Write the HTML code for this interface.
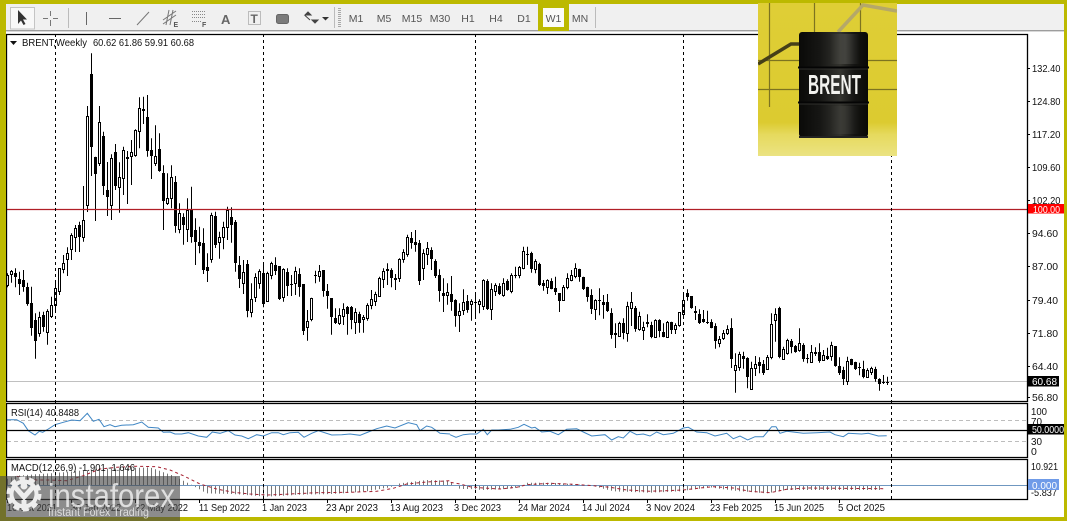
<!DOCTYPE html>
<html lang="en">
<head>
<meta charset="utf-8">
<title>BRENT Weekly</title>
<style>
html,body{margin:0;padding:0;background:#fff}
body{width:1067px;height:521px;overflow:hidden}
svg{display:block;font-family:"Liberation Sans",sans-serif}
#s{filter:blur(.3px)}
</style>
</head>
<body>
<svg id="s" xmlns="http://www.w3.org/2000/svg" width="1067" height="521" viewBox="0 0 1067 521">
<defs>
<linearGradient id="bar" x1="0" x2="1" y1="0" y2="0">
<stop offset="0" stop-color="#0a0a08"/><stop offset=".3" stop-color="#161614"/><stop offset=".6" stop-color="#34342f"/><stop offset=".8" stop-color="#141412"/><stop offset="1" stop-color="#0a0a06"/>
</linearGradient>
<linearGradient id="hl" x1="0" x2="1" y1="0" y2="0">
<stop offset="0" stop-color="#555550" stop-opacity="0"/><stop offset=".5" stop-color="#555550" stop-opacity=".6"/><stop offset="1" stop-color="#555550" stop-opacity="0"/>
</linearGradient>
<linearGradient id="bg" x1="0" x2="0" y1="0" y2="1">
<stop offset="0" stop-color="#dfce36"/><stop offset=".78" stop-color="#dccb30"/><stop offset=".86" stop-color="#e6da5e"/><stop offset="1" stop-color="#ebe382"/>
</linearGradient>
</defs>
<rect width="1067" height="521" fill="#fff"/>
<!-- toolbar -->
<rect x="0" y="4" width="1067" height="27" fill="#f0f0f0"/>
<rect x="0" y="30" width="1067" height="1.4" fill="#9d9d9d"/>
<rect x="10.5" y="7.5" width="24" height="21.5" fill="#f8f8f8" stroke="#c4c4c4"/>
<path d="M18 10V24L21 20.5 23.5 25 25.5 24 23 19.5H27Z" fill="#333"/>
<path d="M50.5 11V16M50.5 20V26M43 18.5H48M53 18.5H58" stroke="#777" fill="none"/>
<path d="M68.5 8V28" stroke="#bbb"/>
<path d="M86.5 12V25" stroke="#666"/>
<path d="M109 18.5H121" stroke="#666"/>
<path d="M137 25L149 12" stroke="#777"/>
<path d="M163 20L176 11M163 24L176 15M166 25L169 10M170 25L173 10" stroke="#777" fill="none"/>
<text x="173.500" y="27" font-size="7" font-weight="bold" fill="#555">E</text>
<path d="M192 11.500H205M192 14.500H205M192 17.500H205M192 21.500H201" stroke="#888" stroke-dasharray="1 1" fill="none"/>
<text x="202" y="27" font-size="7" font-weight="bold" fill="#555">F</text>
<text x="221" y="24" font-size="13" font-weight="bold" fill="#666">A</text>
<rect x="248.500" y="11.500" width="12" height="13" fill="none" stroke="#888" stroke-dasharray="1 1"/>
<text x="250.500" y="23" font-size="12" font-weight="bold" fill="#666">T</text>
<rect x="276.500" y="14.500" width="12" height="9" rx="2" fill="#7b7b7b" stroke="#666"/>
<path d="M305 15L308 12 311 15ZM305 15.500L310 20M312 20L315 23 318 20Z" fill="#444" stroke="#444"/>
<path d="M322 17H329L325.500 20.500Z" fill="#333"/>
<path d="M334.500 7V28M595.500 7V28" stroke="#bbb"/>
<path d="M339.500 8V27" stroke="#a8a8a8" stroke-width="3" stroke-dasharray="1 1"/>
<g font-size="10.500" fill="#555" text-anchor="middle">
<text x="356" y="22">M1</text><text x="384" y="22">M5</text><text x="412" y="22">M15</text><text x="440" y="22">M30</text><text x="468" y="22">H1</text><text x="496" y="22">H4</text><text x="524" y="22">D1</text><text x="580" y="22">MN</text>
</g>
<rect x="538" y="0" width="31" height="31" fill="#bcb900"/>
<rect x="543" y="8" width="21" height="19" fill="#fbfbf8"/>
<text x="553.500" y="22" font-size="10.500" fill="#555" text-anchor="middle">W1</text>
<!-- chart panels -->
<path d="M7 381.500H1027" stroke="#c0c0c0"/>
<path d="M7 420.500H1027M7 441.500H1027" stroke="#bdbdbd" stroke-dasharray="4 3"/>
<g id="hist"></g>
<path d="M7 485.500H1027" stroke="#6f97c0"/>
<g id="cand"></g>
<path d="M7 209.500H1027" stroke="#b01e26" stroke-width="1.300"/>
<polyline id="rsi1" fill="none" stroke="#3f86c4"/>
<polyline id="rsi2" fill="none" stroke="#3f86c4"/>
<polyline id="sig" fill="none" stroke="#a52030" stroke-dasharray="3 3"/>
<path d="M55.500 34V499M263.500 34V499M475.500 34V499M683.500 34V499M891.500 34V499" stroke="#000" stroke-dasharray="3 3" fill="none"/>
<path d="M6.500 34.500H1027.500V401.500H6.500ZM6.500 403.500H1027.500V457.500H6.500ZM6.500 459.500H1027.500V499.500H6.500ZM7 430.500H1027" fill="none" stroke="#000" stroke-width="1.300"/>
<!-- top-left label -->
<path d="M10 41H17L13.500 45Z" fill="#111"/>
<g font-size="10.500" fill="#111">
<text x="22" y="46" textLength="65" lengthAdjust="spacingAndGlyphs">BRENT,Weekly</text>
<text x="93" y="46" textLength="101" lengthAdjust="spacingAndGlyphs">60.62 61.86 59.91 60.68</text>
<text x="11" y="416" textLength="68" lengthAdjust="spacingAndGlyphs">RSI(14) 40.8488</text>
<text x="11" y="471" textLength="124" lengthAdjust="spacingAndGlyphs">MACD(12,26,9) -1.901 -1.646</text>
</g>
<!-- price axis -->
<path d="M1027 68.500h3M1027 101.500h3M1027 134.500h3M1027 167.500h3M1027 200.500h3M1027 233.500h3M1027 266.500h3M1027 300.500h3M1027 333.500h3M1027 366.500h3M1027 397.500h3" stroke="#000"/>
<g font-size="10.500" fill="#111">
<text x="1032" y="72" textLength="28.500" lengthAdjust="spacingAndGlyphs">132.40</text>
<text x="1032" y="105" textLength="28.500" lengthAdjust="spacingAndGlyphs">124.80</text>
<text x="1032" y="138" textLength="28.500" lengthAdjust="spacingAndGlyphs">117.20</text>
<text x="1032" y="171" textLength="28.500" lengthAdjust="spacingAndGlyphs">109.60</text>
<text x="1032" y="204" textLength="28.500" lengthAdjust="spacingAndGlyphs">102.20</text>
<text x="1032" y="237" textLength="26" lengthAdjust="spacingAndGlyphs">94.60</text>
<text x="1032" y="270" textLength="26" lengthAdjust="spacingAndGlyphs">87.00</text>
<text x="1032" y="304" textLength="26" lengthAdjust="spacingAndGlyphs">79.40</text>
<text x="1032" y="337" textLength="26" lengthAdjust="spacingAndGlyphs">71.80</text>
<text x="1032" y="370" textLength="26" lengthAdjust="spacingAndGlyphs">64.40</text>
<text x="1032" y="401" textLength="26" lengthAdjust="spacingAndGlyphs">56.80</text>
<text x="1031" y="415" textLength="16" lengthAdjust="spacingAndGlyphs">100</text>
<text x="1031" y="425" textLength="11" lengthAdjust="spacingAndGlyphs">70</text>
<text x="1031" y="445" textLength="11" lengthAdjust="spacingAndGlyphs">30</text>
<text x="1031" y="455">0</text>
<text x="1031" y="470" textLength="27" lengthAdjust="spacingAndGlyphs">10.921</text>
<text x="1031" y="496" textLength="26" lengthAdjust="spacingAndGlyphs">-5.837</text>
</g>
<rect x="1028" y="204" width="36" height="9.500" fill="#f00"/>
<text x="1033" y="213" font-size="10.500" fill="#fff" textLength="27" lengthAdjust="spacingAndGlyphs">100.00</text>
<rect x="1028" y="376" width="31" height="10.500" fill="#000"/>
<text x="1032" y="385" font-size="10.500" fill="#fff" textLength="25" lengthAdjust="spacingAndGlyphs">60.68</text>
<rect x="1028" y="424" width="36" height="10.500" fill="#000"/>
<text x="1032" y="433" font-size="10.500" fill="#fff" textLength="32" lengthAdjust="spacingAndGlyphs">50.0000</text>
<rect x="1028" y="479" width="31" height="11" fill="#6f9be8"/>
<text x="1032" y="489" font-size="10.500" fill="#fff" textLength="25" lengthAdjust="spacingAndGlyphs">0.000</text>
<!-- date axis -->
<path d="M7.500 499v4M71.500 499v4M135.500 499v4M199.500 499v4M263.500 499v4M327.500 499v4M391.500 499v4M455.500 499v4M519.500 499v4M583.500 499v4M647.500 499v4M711.500 499v4M775.500 499v4M839.500 499v4" stroke="#000"/>
<g font-size="10.500" fill="#111">
<text x="7" y="511" textLength="50" lengthAdjust="spacingAndGlyphs">10 Oct 2021</text>
<text x="71" y="511" textLength="50" lengthAdjust="spacingAndGlyphs">30 Jan 2022</text>
<text x="135" y="511" textLength="53" lengthAdjust="spacingAndGlyphs">22 May 2022</text>
<text x="199" y="511" textLength="51" lengthAdjust="spacingAndGlyphs">11 Sep 2022</text>
<text x="262" y="511" textLength="45" lengthAdjust="spacingAndGlyphs">1 Jan 2023</text>
<text x="326" y="511" textLength="52" lengthAdjust="spacingAndGlyphs">23 Apr 2023</text>
<text x="390" y="511" textLength="53" lengthAdjust="spacingAndGlyphs">13 Aug 2023</text>
<text x="454" y="511" textLength="47" lengthAdjust="spacingAndGlyphs">3 Dec 2023</text>
<text x="518" y="511" textLength="52" lengthAdjust="spacingAndGlyphs">24 Mar 2024</text>
<text x="582" y="511" textLength="48" lengthAdjust="spacingAndGlyphs">14 Jul 2024</text>
<text x="646" y="511" textLength="49" lengthAdjust="spacingAndGlyphs">3 Nov 2024</text>
<text x="710" y="511" textLength="52" lengthAdjust="spacingAndGlyphs">23 Feb 2025</text>
<text x="774" y="511" textLength="50" lengthAdjust="spacingAndGlyphs">15 Jun 2025</text>
<text x="838" y="511" textLength="47" lengthAdjust="spacingAndGlyphs">5 Oct 2025</text>
</g>
<!-- olive frame -->
<path d="M0 0H1067V521H0ZM6 4V517H1064V4Z" fill="#bcb900" fill-rule="evenodd"/>
<!-- watermark -->
<rect x="0" y="476" width="180" height="45" fill="rgb(70,70,70)" fill-opacity=".62"/>
<circle cx="24" cy="494" r="12.500" fill="none" stroke="#eee" stroke-width="4"/>
<circle cx="24" cy="494" r="15.500" fill="none" stroke="#eee" stroke-width="4" stroke-dasharray="6 3.740"/>
<path d="M24 500V510M15 487L24 497 33 487" fill="none" stroke="#eee" stroke-width="5"/>
<circle cx="24" cy="486" r="3.500" fill="#eee"/>
<text x="48" y="507" font-size="33" fill="#fff" fill-opacity=".72" textLength="127" lengthAdjust="spacingAndGlyphs">instaforex</text>
<text x="48" y="516" font-size="12" fill="#fff" fill-opacity=".7" textLength="101" lengthAdjust="spacingAndGlyphs">Instant Forex Trading</text>
<!-- barrel image -->
<svg x="758" y="3" width="139" height="153" viewBox="758 3 139 153">
<rect x="758" y="3" width="139" height="153" fill="url(#bg)"/>
<path d="M769.500 3V107M814.500 3V60M860.500 3V60M758 60.500H897M758 89.500H897" stroke="#7d7320" stroke-width="1.200" fill="none"/>
<path d="M758 64L791 44H800" stroke="#453f18" stroke-width="3.500" fill="none"/>
<path d="M838 32L863 5 897 11" stroke="#b5a869" stroke-width="3.500" fill="none"/>
<rect x="799" y="32" width="69" height="105" rx="3" fill="url(#bar)"/>
<rect x="830" y="34" width="30" height="30" fill="url(#hl)"/>
<rect x="830" y="106" width="30" height="28" fill="url(#hl)" opacity=".5"/>
<path d="M798 67.500H869M798 102.500H869" stroke="#050505" stroke-width="2"/>
<path d="M799 69H868M799 104H868" stroke="#3a3a36" stroke-width=".7"/>
<path d="M799 137H868" stroke="#222" stroke-width="2"/>
<text x="808" y="94" font-size="28" font-weight="bold" fill="#f2f2ee" textLength="53" lengthAdjust="spacingAndGlyphs">BRENT</text>
</svg>
</svg>
<script>
var A=[[700,705,735,742,0],[690,694,702,728,0],[685,700,712,742,1],[695,718,732,765,1],[690,720,740,755,1],[728,740,793,797,1],[740,790,865,887,1],[820,840,902,956,1],[815,832,880,890,0],[815,825,860,875,1],[808,812,875,914,0],[770,796,828,834,0],[720,745,795,818,0],[685,685,752,765,0],[645,670,686,700,0],[622,640,656,708,0],[580,586,628,660,0],[555,565,590,636,0],[545,555,590,636,1],[438,540,590,605,0],[198,228,494,516,0],[40,102,322,408,1],[350,352,402,543,1],[198,246,370,378,0],[275,289,437,465,1],[366,450,470,528,1],[343,355,494,540,0],[312,337,437,450,1],[367,412,442,518,0],[320,330,415,465,0],[333,351,353,492,0],[300,337,347,435,0],[268,270,344,350,0],[172,205,272,325,0],[170,207,208,252,0],[165,232,332,350,1],[295,331,347,417,1],[256,347,368,378,0],[280,327,392,395,1],[376,400,482,570,1],[400,474,488,495,0],[376,412,475,505,0],[408,427,557,578,1],[490,520,566,580,0],[520,530,556,614,1],[475,510,566,606,0],[440,510,590,608,1],[535,570,605,675,1],[560,607,617,640,1],[565,610,690,702,1],[640,680,692,726,1],[518,526,658,668,0],[515,528,615,624,1],[575,592,606,656,0],[545,562,592,628,0],[500,510,562,600,0],[502,530,554,608,1],[540,546,668,695,1],[648,676,716,744,1],[660,696,730,762,0],[660,672,812,832,1],[730,778,815,832,0],[700,712,770,786,0],[688,692,730,746,0]];
var B=[[190,220,312,322,1],[215,218,302,305,0],[185,190,224,238,0],[172,196,212,225,1],[198,198,296,300,1],[205,208,290,305,0],[205,217,257,288,1],[225,253,256,288,1],[200,214,250,285,0],[205,223,262,290,1],[252,252,392,405,1],[330,362,382,422,0],[293,294,358,364,0],[212,226,229,250,1],[195,212,227,245,0],[210,211,272,290,1],[252,274,287,326,1],[295,295,352,404,1],[325,355,368,372,1],[325,346,370,375,0],[310,328,348,375,0],[318,321,342,404,1],[318,320,360,388,1],[325,337,365,402,0],[335,343,368,398,1],[345,352,358,398,0],[310,315,355,362,0],[270,298,316,328,0],[275,282,302,318,0],[230,234,287,290,0],[205,213,238,264,0],[190,208,210,255,0],[205,210,233,262,1],[222,235,240,270,1],[175,178,235,246,0],[148,156,178,188,0],[104,111,162,170,0],[96,115,128,146,1],[90,126,134,155,1],[120,130,242,255,1],[148,160,203,240,0],[126,144,162,195,0],[142,150,176,210,1],[178,183,228,234,1],[208,226,272,305,1],[235,280,287,336,1],[250,277,284,314,0],[228,283,305,332,1],[298,300,347,380,1],[310,334,344,396,0],[268,307,330,345,0],[285,304,330,338,1],[298,304,313,362,0],[285,306,310,356,1],[298,304,313,340,0],[238,240,318,330,0],[238,242,327,330,1],[250,267,326,360,0],[250,256,272,288,0],[250,259,282,285,1],[235,250,286,290,0],[238,242,270,272,1],[220,225,272,280,0],[200,225,228,235,1],[198,200,224,235,0],[140,154,203,208,0],[140,162,163,195,1],[155,158,206,218,1],[178,184,208,220,0],[188,192,254,258,1],[240,250,258,272,1],[238,240,260,282,0],[235,243,266,268,1],[230,264,276,285,1],[280,280,304,336,1]];
var C=[[135,142,180,182,0],[100,115,142,148,0],[90,105,120,124,0],[70,85,107,115,0],[86,87,112,125,1],[110,112,147,150,1],[140,142,170,185,1],[148,166,208,222,1],[178,181,208,240,0],[145,181,183,226,1],[165,186,194,236,1],[162,186,212,216,1],[205,219,284,296,1],[250,280,284,324,1],[245,250,287,288,0],[235,250,278,298,1],[185,198,280,305,0],[156,187,205,258,0],[198,205,266,275,1],[215,228,266,272,0],[245,262,270,300,0],[223,247,252,262,1],[245,255,290,295,1],[238,240,290,292,0],[238,240,272,292,1],[250,277,290,292,1],[243,245,290,292,0],[245,247,270,282,1],[250,256,266,282,0],[216,217,256,260,0],[165,181,221,236,0],[148,160,172,182,1],[168,168,203,206,1],[198,213,220,240,1],[208,222,248,252,1],[210,238,246,248,1],[212,246,250,252,1],[238,246,263,265,1],[250,258,302,326,1],[288,298,308,322,0],[270,280,293,300,0],[256,268,280,285,0],[235,265,356,384,1],[340,376,391,458,0],[335,343,380,392,0],[335,349,357,386,1],[352,355,412,445,1],[365,384,448,448,0],[348,371,384,408,0],[352,367,379,400,1],[360,373,398,405,1],[345,352,386,386,0],[220,253,352,358,0],[205,223,241,305,0],[200,205,350,355,1],[320,328,356,358,0],[296,301,338,344,0],[297,304,320,340,1],[315,319,336,338,1],[265,310,331,335,0],[310,316,356,365,1],[342,355,358,370,1],[315,337,366,368,0],[322,337,340,348,0],[310,337,363,368,1],[330,346,359,362,0],[323,347,356,360,1],[305,316,349,362,0],[318,319,378,380,1],[352,378,400,405,1],[380,390,417,435,1],[350,364,423,435,0],[356,358,374,376,1],[365,367,388,390,1],[368,381,383,406,1],[362,388,410,415,1],[385,391,410,412,0],[380,384,395,405,0],[380,386,418,425,1],[415,418,431,452,1],[405,427,428,432,1],[410,425,427,435,1]];
var wick='',fill='',hollow='',i=0;
function add(list,oy){
  list.forEach(function(c){
    var x=7.5+4*i,h=oy+c[0]/3,t=Math.round(oy+c[1]/3),b=Math.round(oy+c[2]/3),l=oy+c[3]/3;
    if(b<=t)b=t+1;
    wick+='M'+x+' '+h.toFixed(1)+'V'+l.toFixed(1);
    if(c[4])fill+='<rect x="'+(x-1.5)+'" y="'+t+'" width="3" height="'+(b-t)+'"/>';
    else hollow+='<rect x="'+(x-1)+'" y="'+(t+.5)+'" width="2" height="'+(b-t)+'"/>';
    i++;
  });
}
add(A,40);add(B,200);add(C,240);
document.getElementById('cand').innerHTML='<path d="'+wick+'" stroke="#000" fill="none"/><g fill="#000">'+fill+'</g><g fill="#fff" stroke="#000">'+hollow+'</g>';
function pts(a,ox,oy){return a.map(function(p){return (ox+p[0]/3).toFixed(1)+','+(oy+p[1]/3).toFixed(1)});}
var r1=[[20,47],[50,47],[70,58],[85,80],[105,93],[118,82],[128,85],[145,75],[165,62],[190,55],[215,48],[240,50],[262,28],[280,52],[297,46],[312,68],[330,62],[345,68],[365,64],[400,62],[425,54],[445,70],[475,72],[490,85],[510,84],[525,90],[545,90],[565,86],[595,96],[620,100],[637,84],[660,88],[685,80],[705,93],[725,96],[745,104],[770,92],[790,96],[815,86],[835,86],[850,92],[870,86],[895,85],[912,100],[935,88],[955,80],[995,93],[1025,92],[1050,90],[1080,94],[1105,84],[1130,74],[1160,66],[1185,72],[1225,56],[1250,62],[1260,80],[1280,66],[1295,70],[1320,88],[1350,90]];
var r2=[[0,92],[18,100],[40,92],[60,90],[80,90],[100,76],[112,92],[125,78],[145,78],[180,76],[205,70],[222,61],[245,72],[255,70],[275,84],[300,82],[325,92],[350,76],[380,74],[400,84],[425,96],[465,92],[485,108],[505,98],[520,102],[540,82],[560,92],[580,90],[600,96],[620,84],[640,92],[670,88],[700,72],[715,70],[740,84],[770,86],[795,96],[830,88],[850,104],[870,96],[893,108],[915,98],[940,98],[965,68],[978,68],[990,88],[1010,82],[1060,88],[1100,86],[1140,84],[1155,92],[1180,98],[1195,88],[1235,90],[1255,88],[1285,96],[1310,95]];
document.getElementById('rsi1').setAttribute('points',pts(r1,0,404).join(' '));
document.getElementById('rsi2').setAttribute('points',pts(r2,450,404).join(' '));
var s1=[[50,217],[100,228],[150,228],[200,230],[250,215],[300,195],[350,190],[410,187],[470,188],[510,198],[550,215],[600,240],[650,255],[700,265],[750,270],[800,273],[870,270],[950,266],[1050,265],[1130,262],[1180,253],[1220,240],[1280,234],[1350,230]];
var s2=[[0,235],[30,240],[60,248],[100,252],[150,255],[200,250],[230,242],[300,238],[370,241],[430,245],[480,250],[530,258],[600,262],[700,258],[750,252],[790,248],[850,252],[900,262],[960,266],[1010,256],[1070,252],[1300,254]];
document.getElementById('sig').setAttribute('points',pts(s1,0,404).concat(pts(s2,450,404)).join(' '));
var h=[[20,225],[50,215],[150,208],[300,195],[450,190],[520,215],[570,240],[620,268],[700,270],[800,278],[900,272],[1000,270],[1100,262],[1170,250],[1200,238],[1280,228],[1350,230]].map(function(p){return [p[0]/3,404+p[1]/3]})
 .concat([[0,232],[30,255],[60,255],[100,258],[170,255],[210,250],[230,236],[300,236],[370,240],[430,246],[490,262],[600,266],[690,262],[780,250],[850,260],[950,268],[1010,258],[1300,258]].map(function(p){return [450+p[0]/3,404+p[1]/3]}));
var hp='';
for(var k=0;k<221;k++){
  var x=7.5+4*k,y=485.5;
  for(var j=0;j<h.length-1;j++){
    if(x>=h[j][0]&&x<=h[j+1][0]){y=h[j][1]+(h[j+1][1]-h[j][1])*(x-h[j][0])/(h[j+1][0]-h[j][0]);break;}
  }
  hp+='M'+x+' 485.5V'+y.toFixed(1);
}
document.getElementById('hist').innerHTML='<path d="'+hp+'" stroke="#777" fill="none"/>';
</script>
</body>
</html>
